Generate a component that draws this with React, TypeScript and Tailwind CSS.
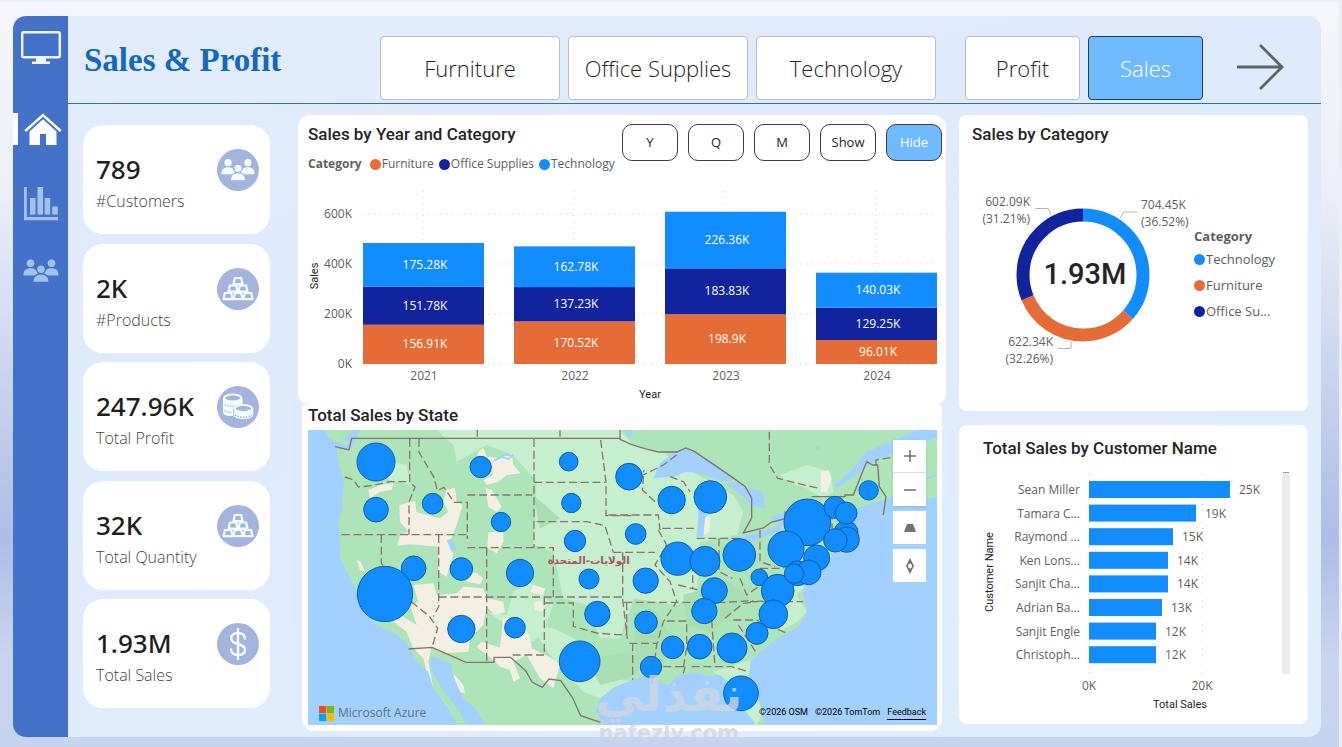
import React from "react";

type IconProps = { className?: string };

const BLUE = "#118dff";
const NAVY = "#12239e";
const ORANGE = "#e66c37";

/* ---------- icons ---------- */

const MonitorIcon = () => (
  <svg viewBox="0 0 40 34" className="h-[34px] w-10" aria-hidden="true">
    <rect x="1.2" y="1.2" width="37.6" height="25" rx="1.5" fill="none" stroke="#eef6ff" strokeWidth="2.4" />
    <path d="M15 27h10v3.5h4V33H11v-2.5h4z" fill="#eef6ff" />
  </svg>
);

const HomeIcon = () => (
  <svg viewBox="0 0 38 32" className="h-8 w-[38px]" aria-hidden="true">
    <path d="M1.2 18 19 2l17.8 16" fill="none" stroke="#fff" strokeWidth="2.4" />
    <path d="M5.5 18.5 19 6.3l13.5 12.2V32H22V21h-6v11H5.5z" fill="#fff" />
  </svg>
);

const BarsIcon = () => (
  <svg viewBox="0 0 34 34" className="h-[34px] w-[34px]" fill="#a4c1ed" aria-hidden="true">
    <path d="M0 0h2.8v30H34v3.3H0z" />
    <rect x="6" y="11" width="5.5" height="16.5" />
    <rect x="13.500" y="0" width="5.5" height="27.5" />
    <rect x="20.700" y="11" width="5.5" height="16.5" />
    <rect x="28.2" y="19.5" width="5.6" height="8" />
  </svg>
);

const PeopleIcon = ({ className = "", gap }: IconProps & { gap: string }) => (
  <svg viewBox="0 0 36 24" className={className} fill="currentColor" aria-hidden="true">
    <circle cx="7.5" cy="4.2" r="3.8" />
    <circle cx="28.5" cy="4.2" r="3.8" />
    <path d="M.5 16.5c0-5 2.2-7.3 7-7.3s7.5 2.3 7.5 7.3zM21 16.500c0-5 2.7-7.3 7.5-7.3s7 2.3 7 7.3z" />
    <circle cx="18" cy="10.2" r="4.4" stroke={gap} strokeWidth="1.3" />
    <path d="M9.8 23.5c0-6 2.8-8.6 8.2-8.6s8.2 2.6 8.2 8.6z" stroke={gap} strokeWidth="1.3" />
  </svg>
);

const CratesIcon = () => (
  <svg viewBox="0 0 32 24" className="h-6 w-8" fill="none" stroke="#f4fbff" strokeWidth="2.2" strokeLinejoin="round" aria-hidden="true">
    {[[16, 1], [11, 8.5], [21, 8.5], [6, 16], [16, 16], [26, 16]].map(([x, y]) => (
      <path key={`${x}-${y}`} d={`M${x - 3.2} ${y}h6.4l1.3 6.2h-9z`} />
    ))}
  </svg>
);

const CoinsIcon = () => (
  <svg viewBox="0 0 32 28" className="h-7 w-8" aria-hidden="true">
    <path d="M1 5v14c0 3 5 4.500 10 4V5z" fill="#f4fbff" />
    <path d="M1 5v9c3 4 16 4 19.5 0V5z" fill="#f4fbff" />
    <ellipse cx="10.7" cy="5" rx="8.6" ry="3.5" fill="#a3b4df" stroke="#f4fbff" strokeWidth="2" />
    <path d="M2.5 11.500c4 2.5 12 2.5 16 0M2.5 17.500c2 1.5 5 2 8 2" fill="none" stroke="#a3b4df" strokeWidth="1.3" strokeDasharray="1.5 1.3" />
    <path d="M11.5 15.500v7.500c3 4.500 16.500 4.500 20 0v-7.500z" fill="#f4fbff" stroke="#a3b4df" strokeWidth=".6" />
    <ellipse cx="21.5" cy="15.5" rx="8.8" ry="3.4" fill="#a3b4df" stroke="#f4fbff" strokeWidth="2" />
    <path d="M13 22c4.500 3 12.500 3 17 0" fill="none" stroke="#a3b4df" strokeWidth="1.5" strokeDasharray="1.5 1.3" />
  </svg>
);

const DollarIcon = () => (
  <svg viewBox="0 0 18 32" className="h-8 w-[18px]" fill="none" stroke="#f4fbff" strokeWidth="2.4" strokeLinecap="round" aria-hidden="true">
    <path d="M9 1v30M15.800 10.500C15.800 6.800 13 5 9 5S2.200 7 2.200 10.300C2.200 14 5.200 15 9 16s7 2.200 7 5.800S13 27 9 27s-7-2-7-5.500" />
  </svg>
);

const ArrowIcon = () => (
  <svg viewBox="0 0 48 48" className="h-12 w-12" fill="none" stroke="#5f6368" strokeWidth="2.8" aria-hidden="true">
    <path d="M0 24h45M23 2l22 22-22 22" />
  </svg>
);

/* ---------- side bar and KPI cards ---------- */

const Sidebar = () => (
  <nav aria-label="Pages" className="flex w-[55px] shrink-0 flex-col rounded-l-[13px] bg-[#4472c9] pt-[15px]">
    <a href="#overview" aria-label="Overview" className="mb-12 flex justify-center"><MonitorIcon /></a>
    <a href="#home" aria-label="Home" className="relative mb-[42px] flex justify-center pl-1 before:absolute before:left-0 before:top-0 before:h-8 before:w-[5px] before:bg-white">
      <HomeIcon />
    </a>
    <a href="#reports" aria-label="Reports" className="mb-[38px] flex justify-center"><BarsIcon /></a>
    <a href="#customers" aria-label="Customers" className="flex justify-center">
      <PeopleIcon className="h-6 w-9 text-[#a4c1ed]" gap="#4472c9" />
    </a>
  </nav>
);

const kpis = [
  { value: "789", label: "#Customers", icon: <PeopleIcon className="h-6 w-[34px] text-[#f4fbff]" gap="#a3b4df" /> },
  { value: "2K", label: "#Products", icon: <CratesIcon /> },
  { value: "247.96K", label: "Total Profit", icon: <CoinsIcon /> },
  { value: "32K", label: "Total Quantity", icon: <CratesIcon /> },
  { value: "1.93M", label: "Total Sales", icon: <DollarIcon /> },
];

const KpiCard = ({ value, label, icon }: (typeof kpis)[number]) => (
  <section className="flex h-[109px] justify-between rounded-[20px] bg-white pl-[13px] pr-[11px] pt-6">
    <div>
      <p className="font-['Noto_Sans',sans-serif] text-[26px] font-medium leading-10 text-[#1f1f1f]">{value}</p>
      <p className="text-base font-light leading-6 text-[#444]">{label}</p>
    </div>
    <div className="-ml-10 flex h-[42px] w-[42px] shrink-0 items-center justify-center rounded-full bg-[#a3b4df]">{icon}</div>
  </section>
);

/* ---------- header ---------- */

const Slicer = ({ label, active, wide }: { label: string; active?: boolean; wide?: boolean }) => (
  <button
    type="button"
    aria-pressed={!!active}
    className={`h-16 shrink-0 rounded border text-[22px] ${wide ? "w-[180px]" : "w-[115px]"} ${
      active ? "border-[#1f3f63] bg-[#70bbff] font-light text-white" : "border-[#bdbdbd] bg-white font-light text-[#1f1f1f]"
    }`}
  >
    {label}
  </button>
);

const Header = () => (
  <header className="flex h-[88px] items-start border-b border-[#2f6fae] pt-5">
    <h1 className="w-[312px] shrink-0 pl-4 pt-1 font-['Liberation_Serif',serif] text-[33px] font-bold leading-10 text-[#1469bd]">
      Sales &amp; Profit
    </h1>
    <div className="flex gap-2">
      <Slicer label="Furniture" wide />
      <Slicer label="Office Supplies" wide />
      <Slicer label="Technology" wide />
    </div>
    <div className="ml-[29px] flex gap-2">
      <Slicer label="Profit" />
      <Slicer label="Sales" active />
    </div>
    <a href="#next" aria-label="Next page" className="ml-[34px] mt-[7px]"><ArrowIcon /></a>
  </header>
);

/* ---------- stacked columns ---------- */

const PanelTitle = ({ children }: { children: React.ReactNode }) => (
  <h2 className="whitespace-nowrap font-['Roboto',sans-serif] text-[17px] font-medium leading-5 text-[#252423]">{children}</h2>
);

const years = [
  { year: "2021", furniture: 156.91, office: 151.78, tech: 175.28 },
  { year: "2022", furniture: 170.52, office: 137.23, tech: 162.78 },
  { year: "2023", furniture: 198.9, office: 183.83, tech: 226.36 },
  { year: "2024", furniture: 96.01, office: 129.25, tech: 140.03 },
];

const YearChart = () => {
  const base = 190;
  const scale = 0.25;
  return (
    <svg viewBox="0 0 648 231" className="block h-auto w-full text-[12px]" role="img" aria-label="Sales by year and category">
      {[0, 200, 400, 600].map((v) => (
        <g key={v}>
          <line x1="64" x2="638" y1={base - v * scale} y2={base - v * scale} stroke="#d0d0d0" strokeDasharray="1 5" />
          <text x="54" y={base - v * scale + 4} textAnchor="end" fill="#605e5c">{v}K</text>
        </g>
      ))}
      {years.map((row, i) => {
        const x = 65 + i * 151;
        let y = base;
        const parts: [number, string][] = [[row.furniture, ORANGE], [row.office, NAVY], [row.tech, BLUE]];
        return (
          <g key={row.year}>
            <line x1={x + 60} x2={x + 60} y1="17" y2={base} stroke="#d0d0d0" strokeDasharray="1 5" />
            {parts.map(([value, fill]) => {
              const h = value * scale;
              y -= h;
              return (
                <g key={fill}>
                  <rect x={x} y={y} width="121" height={h} fill={fill} />
                  <text x={x + 62} y={y + h / 2 + 4} textAnchor="middle" fill="#fff">{value}K</text>
                </g>
              );
            })}
            <text x={x + 61} y="206" textAnchor="middle" fill="#605e5c">{row.year}</text>
          </g>
        );
      })}
      <text x="352" y="224" textAnchor="middle" fill="#252423" className="font-['Roboto',sans-serif] text-[11px]">Year</text>
      <text transform="translate(20 102) rotate(-90)" textAnchor="middle" fill="#252423" className="font-['Roboto',sans-serif] text-[11px]">Sales</text>
    </svg>
  );
};

const Legend = ({ color, label }: { color: string; label: string }) => (
  <span className="flex items-center gap-px">
    <svg viewBox="0 0 11 11" className="h-[11px] w-[11px]" aria-hidden="true"><circle cx="5.5" cy="5.5" r="5.5" fill={color} /></svg>
    {label}
  </span>
);

const Toggle = ({ label, active }: { label: string; active?: boolean }) => (
  <button
    type="button"
    aria-pressed={!!active}
    className={`h-[37px] w-14 rounded-[10px] border border-[#3c3c3c] text-[13px] ${active ? "bg-[#70bbff] text-white" : "bg-white text-[#252423]"}`}
  >
    {label}
  </button>
);

const YearPanel = () => (
  <section className="rounded-xl bg-white pt-[9px]">
    <div className="flex h-[50px] justify-between pl-[10px] pr-1">
      <div className="flex flex-col gap-[10px]">
        <PanelTitle>Sales by Year and Category</PanelTitle>
        <div className="flex gap-[5px] whitespace-nowrap text-[12px] leading-5 text-[#605e5c]">
          <span className="pr-[3px] font-bold">Category</span>
          <Legend color={ORANGE} label="Furniture" />
          <Legend color={NAVY} label="Office Supplies" />
          <Legend color={BLUE} label="Technology" />
        </div>
      </div>
      <div className="flex gap-[10px]">
        <Toggle label="Y" />
        <Toggle label="Q" />
        <Toggle label="M" />
        <Toggle label="Show" />
        <Toggle label="Hide" active />
      </div>
    </div>
    <YearChart />
  </section>
);

/* ---------- map ---------- */

/* centre x, centre y, radius in map units */
const bubbles: [number, number, number][] = [
  [228, 111, 57], [542, 126, 32], [228, 254, 37], [398, 236, 31], [603, 291, 29],
  [806, 110, 28], [814, 234, 29], [825, 348, 32], [867, 462, 30], [341, 430, 37],
  [255, 507, 83], [484, 432, 34], [660, 444, 41], [484, 612, 41], [645, 608, 31],
  [892, 567, 38], [839, 709, 61], [987, 155, 40], [1007, 327, 31], [1115, 225, 41],
  [1231, 216, 49], [1037, 467, 38], [1038, 592, 34], [1053, 726, 32], [1133, 401, 50],
  [1215, 409, 45], [1318, 390, 49], [1243, 497, 39], [1213, 558, 38], [1378, 457, 25],
  [1118, 667, 34], [1199, 665, 37], [1296, 669, 45], [1323, 805, 52], [1371, 625, 33],
  [1433, 497, 49], [1420, 568, 43], [1522, 292, 70], [1605, 247, 33], [1638, 323, 36],
  [1638, 264, 33], [1640, 344, 38], [1606, 346, 35], [1550, 399, 39], [1458, 372, 54],
  [1493, 445, 37], [1526, 442, 37], [1482, 446, 29], [1706, 196, 29],
];

const UsMap = () => (
  <svg viewBox="24 15 1887 885" className="block h-auto w-full" role="img" aria-label="Total sales by state">
    <rect x="24" y="15" width="1887" height="885" fill="#aee5b8" />
    {/* plains */}
    <g fill="#c5efcd">
      <path d="M410 15H960L1000 60 1090 80 1120 110 1230 170 1300 210 1330 260 1310 330 1200 350 1190 500 1130 540 1060 530 1000 520 960 640 900 640 860 540 790 520 760 380 700 360 710 170 640 90 560 60 470 110 460 60Z" />
      <path d="M1440 150L1520 120 1590 140 1600 200 1570 220 1520 190 1460 170ZM1490 590L1520 560 1490 510 1540 460 1600 400 1570 370 1490 430 1450 560 1440 620ZM690 600L760 610 860 660 880 750 1000 770 980 800 900 820 850 800 750 690ZM1240 740L1370 700 1350 780 1390 860 1370 900 1330 850 1290 770Z" />
      <path d="M200 90L320 120 330 180 250 160 190 130ZM560 560L620 570 640 500 690 470 760 540 730 620 700 650Z" />
    </g>
    <g fill="#a8dfb2">
      <path d="M700 210L780 280 720 310ZM1000 560L1060 550 1120 640 1080 740 1010 730ZM1150 510L1290 470 1350 520 1230 620 1160 600ZM860 700L1000 680 1040 720 980 760 900 780Z" />
    </g>
    {/* dry land */}
    <g fill="#f3efe3">
      <path d="M535 80L550 68 560 95 600 100 635 85 640 120 662 145 620 150 595 170 560 180 550 165 580 150 570 115 530 100ZM556 188L575 195 605 245 590 260 565 245ZM565 322L610 318 610 350 590 385 562 368Z" />
      <path d="M205 195L240 180 280 175 275 195 240 200 210 220ZM298 240L345 228 350 262 420 280 445 260 430 230 440 195 465 188 470 230 488 240 470 300 450 350 460 390 440 455 415 440 415 365 330 358 292 362 300 330 325 320 300 290ZM170 405L182 410 195 440 180 435Z" />
      <path d="M480 430L530 445 550 460 540 478 500 470ZM340 480L400 475 410 510 470 505 490 485 550 490 560 520 610 530 615 562 585 570 560 545 550 600 510 640 505 680 440 685 395 670 385 710 400 790 390 780 370 700 340 670 320 620 280 590 300 570 350 600 330 540 355 530ZM700 480L735 490 730 510 690 500ZM700 535L725 525 735 560 705 555ZM610 575L650 590 690 630 695 670 755 700 780 720 760 790 720 760 680 690 640 710 660 760 640 770 630 735 600 725 580 705 530 665 545 650 600 668Z" />
      <path d="M460 745L490 780 495 805 475 800ZM395 830L415 810 440 840 430 855ZM1563 140L1585 135 1595 160 1580 205 1562 200ZM1210 270L1232 275 1228 320 1212 330Z" />
    </g>
    {/* water */}
    <g fill="#a2d1ff">
      <path d="M24 15H78L95 38 140 35 160 15 180 15 165 50 150 75 108 70 118 120 132 170 126 250 114 300 122 350 120 400 146 450 176 510 205 570 235 602 290 628 325 660 350 710 385 740 400 790 432 830 475 900H24Z" />
      <path d="M392 692L455 716 462 760 490 820 525 850 557 900H500L470 850 425 790 393 735Z" />
      <path d="M912 900L888 860 900 820 945 785 1000 765 1045 745 1080 770 1105 780 1130 752 1180 742 1230 752 1262 750 1290 790 1310 830 1345 870 1365 900Z" />
      <path d="M1911 900H1393L1388 860 1365 800 1348 750 1352 705 1395 670 1440 635 1495 605 1522 560 1508 505 1520 455 1575 430 1600 385 1650 360 1690 345 1665 325 1655 280 1670 250 1720 235 1780 215 1850 230 1911 200Z" />
      <path d="M1080 115L1125 80 1165 70 1195 90 1240 110 1275 145 1310 165 1270 170 1200 145 1160 140 1120 155 1060 160ZM1275 175L1310 172 1350 190 1390 200 1395 250 1350 240 1330 215ZM1190 200L1215 195 1250 240 1215 280 1210 335 1190 335 1195 280ZM1303 340L1350 330 1420 308 1455 290 1440 315 1380 340 1330 355ZM1413 275L1460 262 1490 270 1470 295 1420 292Z" />
      <path d="M1600 180L1650 140 1700 80 1770 50 1850 15H1911V40L1830 60 1770 90 1720 110 1670 150 1610 190ZM440 345L455 342 470 375 455 380ZM970 15L1000 15 990 40ZM1540 70L1555 60 1560 75Z" />
    </g>
    <g fill="#aee5b8">
      <path d="M78 18L110 30 150 50 140 62 110 50 85 38ZM1820 228L1870 195 1911 180V215L1850 232ZM1800 80L1850 60 1911 70V90L1850 85Z" />
    </g>
    <path d="M580 108l25-12 20 6 15-14M600 98l12-10 24 4M1615 180l60-45M1830 175l80-25" fill="none" stroke="#a2d1ff" strokeWidth="5" />
    {/* state lines */}
    <g fill="none" stroke="#8b7470" strokeWidth="4" strokeDasharray="24 11">
      <path d="M134 156l26 8 15 22 40-4 55-12h55M329 42v130l16 14-18 45v98M357 42v40l45 75 10 40 20-10 30 45h40v110M502 210H697M702 42v326M125 329H500M244 330v85l90 115M334 530l55 45 24 35-18 60M416 330v215l-16 30M502 368H760v148M702 172H915M710 290H860l55 12 25 80M560 368V712M416 516H970M733 516V690H630M735 534h85v70l70 20 60 5 30 0M902 45l16 127v100h80" />
      <path d="M925 270H1075l5 45M940 382H1065M968 382v140l14 120M1088 310H1190M1065 230l-38-35 5-60M1075 315l25 45-35 60 45 50 20 60-40 60-20 70-15 120M972 532H1270l90-5M988 655h85M980 532v100M998 655l0 110M1178 380v110M1190 340H1330M1257 340v100l40 20M1135 480l60 15 55-10M1320 460l20 50 70-50M1380 315v95l45 15M1100 588h60v80l-10 60M1235 585l10 140M1275 580l55-45 80-10M1300 585h70l90 40M1315 600l55 85M1155 725l-5 20M1090 725h60M1175 725h120l50 15M1350 530H1510" />
      <path d="M1408 20v100l25 40 80 20 45 10M1728 120v-15l60-10M1110 155l40 15 20 30M1130 90l-40 30-60 30M1380 430h60v-10M1450 430l30-50M1596 260l0 60 60 0M532 15v20M780 15v20M1600 325l55 10" />
    </g>
    {/* national borders */}
    <g fill="none" stroke="#86716f" strokeWidth="4">
      <path d="M105 65l42 10 8-35h808M960 15v28l35 16 40 12 40 10 55 0 28-12 25 10 110 75 42 30 20 35 0 60-25 45 60-15 25-18 40-10v-20l40-5M1535 215h100l0-5h25l20-50 20-50 18 10 15 0 5 65 20 30-8 55M326 672l70-5 102 45h84v-15h50l45 40 20 35 30 15 20-25 35 5 35 50 25 55 60 20" />
    </g>
    <text x="866" y="418" textAnchor="middle" direction="rtl" fill="#a85566" className="font-['DejaVu_Sans',sans-serif] text-[31px] font-bold">الولايات-المتحدة</text>
    <g fill="#118dff" stroke="#0b5ea8" strokeWidth="3">
      {bubbles.map(([x, y, r]) => <circle key={`${x}-${y}`} cx={x} cy={y} r={r} />)}
    </g>
  </svg>
);

const MapButton = ({ label, children }: { label: string; children: React.ReactNode }) => (
  <button type="button" aria-label={label} className="flex h-[33px] w-[33px] items-center justify-center bg-white">
    <svg viewBox="0 0 16 16" className="h-4 w-4" fill="#737373" aria-hidden="true">{children}</svg>
  </button>
);

const MapPanel = () => (
  <section className="mx-1 rounded-b-xl bg-white pb-[6px] pl-[6px] pr-[5px]">
    <PanelTitle>Total Sales by State</PanelTitle>
    <div className="relative mt-[5px]">
      <UsMap />
      <div aria-hidden="true" className="pointer-events-none absolute -bottom-5 left-[44%] flex w-[168px] flex-col items-center font-['DejaVu_Sans',sans-serif] font-bold text-[#d0d6e0]/80">
        <span dir="rtl" className="text-[48px] leading-[54px]">نفذلي</span>
        <span className="text-[21px] leading-6">nafezly.com</span>
      </div>
      <div className="absolute right-[11px] top-[10px] flex flex-col gap-[5px]">
        <div className="divide-y divide-[#ddd] shadow-sm">
          <MapButton label="Zoom in"><path d="M7.200 2h1.600v5.200H14v1.600H8.800V14H7.200V8.800H2V7.200h5.200z" /></MapButton>
          <MapButton label="Zoom out"><path d="M2 7.200h12v1.600H2z" /></MapButton>
        </div>
        <MapButton label="Pitch"><path d="M5 4h6l3 8H2z" /></MapButton>
        <MapButton label="Rotate"><path fillRule="evenodd" d="M8 0l4 8-4 8-4-8zm0 5.500A2 2.500 0 0 0 8 10.500 2 2.500 0 0 0 8 5.500z" /></MapButton>
      </div>
      <div className="absolute bottom-1 left-[11px] flex items-center gap-1 text-[12px] font-medium leading-4 text-[#62707a]">
        <svg viewBox="0 0 15 15" className="h-[15px] w-[15px]" aria-hidden="true">
          <path fill="#f25022" d="M0 0h7.200v7.200H0z" />
          <path fill="#7fba00" d="M7.800 0H15v7.200H7.800z" />
          <path fill="#00a4ef" d="M0 7.800h7.200V15H0z" />
          <path fill="#ffb900" d="M7.800 7.800H15V15H7.800z" />
        </svg>
        Microsoft Azure
      </div>
      <div className="absolute bottom-[5px] right-[11px] flex gap-[7px] font-['Roboto',sans-serif] text-[9px] leading-[13px] text-black">
        <span>©2026 OSM</span>
        <span>©2026 TomTom</span>
        <a href="#feedback" className="border-b border-black">Feedback</a>
      </div>
    </div>
  </section>
);

/* ---------- donut ---------- */

const slices = [
  { color: BLUE, share: 36.52 },
  { color: ORANGE, share: 32.26 },
  { color: NAVY, share: 31.22 },
];

const Donut = () => {
  let start = 0;
  return (
    <svg viewBox="0 0 235 180" className="block h-auto w-full overflow-visible text-[12px]" fill="#605e5c" role="img" aria-label="Sales by category">
      <g transform="rotate(-90 124 85)" fill="none" strokeWidth="13">
        {slices.map(({ color, share }) => {
          const offset = -start;
          start += share;
          return <circle key={color} cx="124" cy="85" r="60" stroke={color} pathLength="100" strokeDasharray={`${share} ${100 - share}`} strokeDashoffset={offset} />;
        })}
      </g>
      <path d="M76 18.500h13l3 6M178 22h-13l-4 6M99 158.500h13v-7" fill="none" stroke="#b3b3b3" />
      <text x="126" y="94" textAnchor="middle" fill="#252423" className="font-['Roboto',sans-serif] text-[29px] font-medium">1.93M</text>
      <text x="71" y="16" textAnchor="end">602.09K</text>
      <text x="71" y="33" textAnchor="end">(31.21%)</text>
      <text x="182" y="19">704.45K</text>
      <text x="182" y="36">(36.52%)</text>
      <text x="94" y="156" textAnchor="end">622.34K</text>
      <text x="94" y="173" textAnchor="end">(32.26%)</text>
    </svg>
  );
};

const CategoryPanel = () => (
  <section className="rounded-lg bg-white pb-[41px] pt-[9px]">
    <div className="pl-[13px]"><PanelTitle>Sales by Category</PanelTitle></div>
    <div className="mt-[46px] flex">
      <div className="min-w-0 flex-[235]"><Donut /></div>
      <div className="flex min-w-0 flex-[114] flex-col pt-9 text-[13px] leading-5 text-[#605e5c]">
        <b>Category</b>
        <div className="flex flex-col gap-[6px] pt-[3px]">
          <Legend color={BLUE} label="Technology" />
          <Legend color={ORANGE} label="Furniture" />
          <Legend color={NAVY} label="Office Su..." />
        </div>
      </div>
    </div>
  </section>
);

/* ---------- customers ---------- */

const customers: [string, number, string][] = [
  ["Sean Miller", 141, "25K"],
  ["Tamara C...", 107, "19K"],
  ["Raymond ...", 84, "15K"],
  ["Ken Lons...", 79, "14K"],
  ["Sanjit Cha...", 79, "14K"],
  ["Adrian Ba...", 73, "13K"],
  ["Sanjit Engle", 67, "12K"],
  ["Christoph...", 67, "12K"],
];

const CustomerPanel = () => (
  <section className="rounded-lg bg-white pb-2 pt-[13px]">
    <div className="pl-6"><PanelTitle>Total Sales by Customer Name</PanelTitle></div>
    <svg viewBox="0 0 349 250" className="mt-2 block h-auto w-full text-[12px]" fill="#605e5c" role="img" aria-label="Total sales by customer name">
      <path d="M130.500 8V209M243.500 8V209" stroke="#c8c8c8" strokeDasharray="1 5" />
      {customers.map(([name, length, amount], i) => {
        const y = 15 + i * 23.6;
        return (
          <g key={name}>
            <rect x="130" y={y} width={length} height="17" fill={BLUE} />
            <text x="121" y={y + 13} textAnchor="end">{name}</text>
            <text x={139 + length} y={y + 13}>{amount}</text>
          </g>
        );
      })}
      <text x="130" y="224" textAnchor="middle">0K</text>
      <text x="243" y="224" textAnchor="middle">20K</text>
      <text x="221" y="242" textAnchor="middle" fill="#252423" className="font-['Roboto',sans-serif] text-[11px]">Total Sales</text>
      <text transform="translate(34 106) rotate(-90)" textAnchor="middle" fill="#252423" className="font-['Roboto',sans-serif] text-[11px]">Customer Name</text>
      <rect x="323" y="6" width="8" height="202" rx="3" fill="#ececec" />
      <path d="M324 6.500h6" stroke="#a0a0a0" />
    </svg>
  </section>
);

/* ---------- page ---------- */

export default function App() {
  return (
    <div className="min-h-screen border-r-[3px] border-t-2 border-[#eceef4] bg-[linear-gradient(180deg,#f5f7fc_0%,#eceff9_25%,#c3cfec_55%,#adbde6_72%,#c9d5ef_88%,#c7d4f0_100%)] pb-[10px] pl-[13px] pr-[18px] pt-[14px] font-['Open_Sans','Noto_Sans',sans-serif]">
      <div className="flex rounded-[13px] bg-[linear-gradient(165deg,#e2ecfd_0%,#deebfc_40%,#e0ecfd_60%,#deeefc_100%)]">
        <Sidebar />
        <div className="min-w-0 flex-1">
          <Header />
          <main className="flex pb-[6px] pl-[15px] pr-[13px] pt-[11px]">
            <div className="mr-7 flex w-[187px] shrink-0 flex-col justify-between pb-[23px] pt-[10px]">
              {kpis.map((kpi) => <KpiCard key={kpi.label} {...kpi} />)}
            </div>
            <div className="mr-[13px] min-w-0 flex-[648]">
              <YearPanel />
              <MapPanel />
            </div>
            <div className="flex min-w-0 flex-[349] flex-col gap-[14px]">
              <CategoryPanel />
              <CustomerPanel />
            </div>
          </main>
        </div>
      </div>
    </div>
  );
}
